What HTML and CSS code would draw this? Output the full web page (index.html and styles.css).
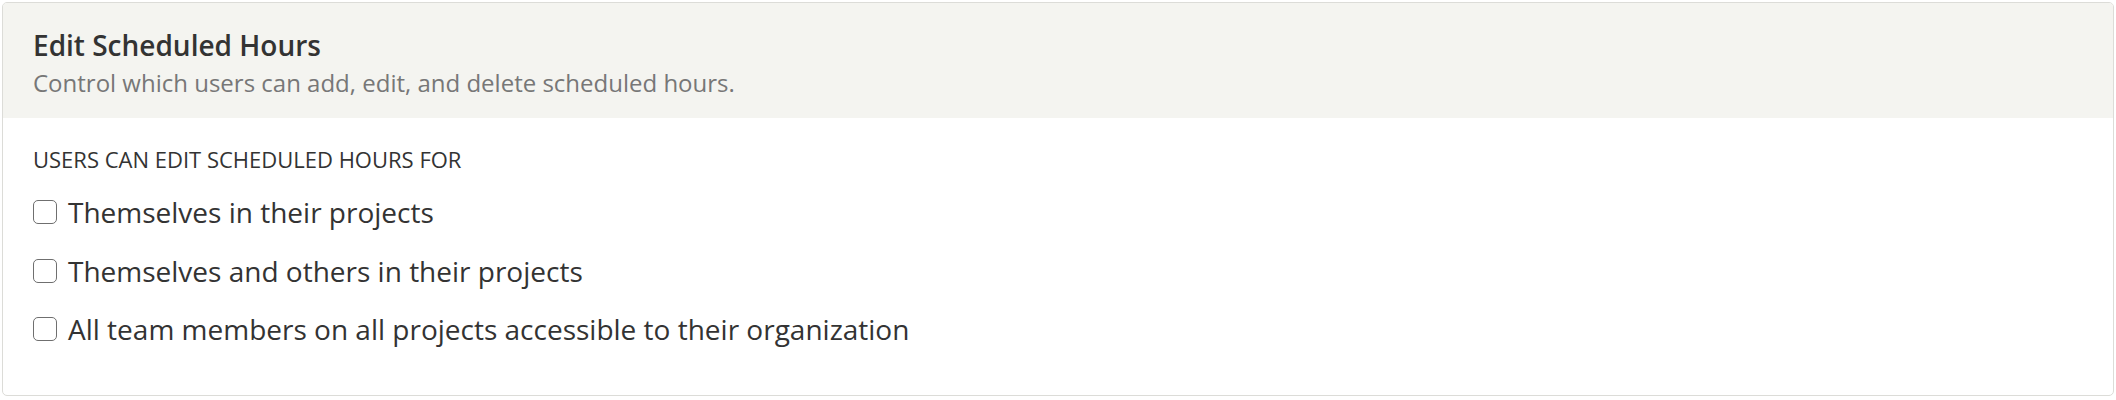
FILE: index.html
```html
<!DOCTYPE html>
<html lang="en">
<head>
    <meta charset="UTF-8">
    <meta name="viewport" content="width=device-width, initial-scale=1.0">
    <title>Edit Scheduled Hours</title>
    <link rel="stylesheet" href="styles.css">
</head>
<body>

    <!-- Panel de permisos -->
    <section class="panel">
        <div class="panel-header">
            <h2 class="panel-title">Edit Scheduled Hours</h2>
            <p class="panel-subtitle">Control which users can add, edit, and delete scheduled hours.</p>
        </div>

        <div class="panel-body">
            <div class="field-label">Users can edit scheduled hours for</div>

            <label class="option">
                <input type="checkbox">
                <span class="box"></span>
                <span>Themselves in their projects</span>
            </label>
            <label class="option">
                <input type="checkbox">
                <span class="box"></span>
                <span>Themselves and others in their projects</span>
            </label>
            <label class="option">
                <input type="checkbox">
                <span class="box"></span>
                <span>All team members on all projects accessible to their organization</span>
            </label>
        </div>
    </section>

</body>
</html>
```

FILE: styles.css
```css
/* General */
body {
    margin: 0;
    padding: 2px 2px 3px;
    background: #fff;
    font-family: 'Open Sans', 'Noto Sans', sans-serif;
    color: #333;
}

/* Panel */
.panel {
    border: 1px solid #dcdcd8;
    border-radius: 5px;
    overflow: hidden;
    height: 394px;
    box-sizing: border-box;
}

.panel-header {
    background: #f4f4f0;
    padding: 23px 30px 19px;
}

.panel-title {
    margin: 0;
    font-size: 28px;
    line-height: 38px;
    font-weight: 600;
    color: #333;
}

.panel-subtitle {
    margin: 3px 0 0;
    font-size: 24px;
    line-height: 32px;
    color: #777;
}

.panel-body {
    padding: 26px 30px;
}

.field-label {
    font-size: 22px;
    line-height: 30px;
    text-transform: uppercase;
    margin-bottom: 19px;
}

/* Opciones */
.option {
    display: flex;
    align-items: center;
    gap: 11px;
    font-size: 28px;
    line-height: 38px;
    margin-bottom: 20.5px;
    cursor: pointer;
}

.option input {
    display: none;
}

.option .box {
    width: 24px;
    height: 24px;
    box-sizing: border-box;
    border: 1.5px solid #6f6f6f;
    border-radius: 5px;
    background: #fff;
    flex-shrink: 0;
}
```
